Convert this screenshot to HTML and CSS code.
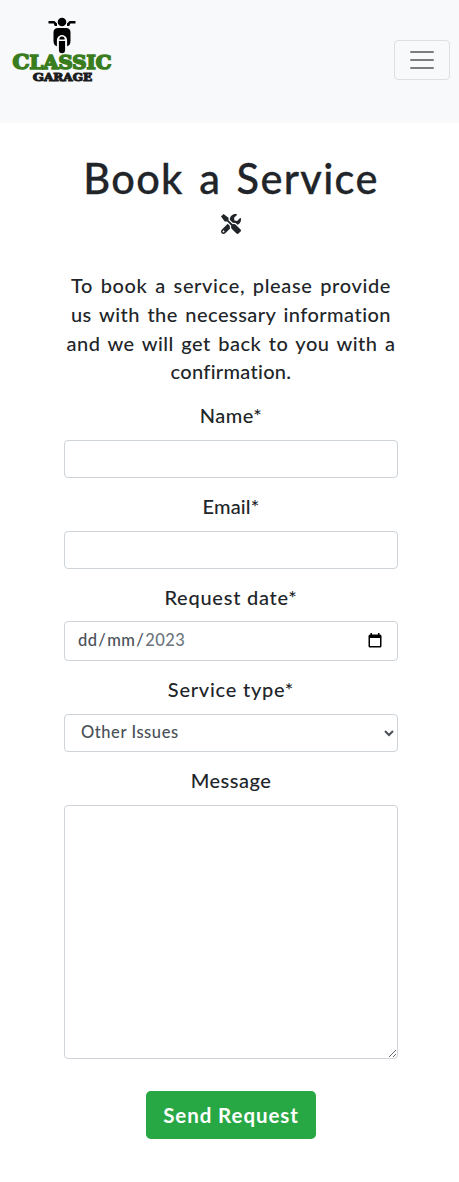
FILE: index.html
```html
<!DOCTYPE html>
<html lang="en">
<head>
<meta charset="utf-8">
<title>Classic Garage</title>
<link rel="stylesheet" href="styles.css">
</head>
<body>
<header class="navbar">
  <a class="brand" aria-label="Classic Garage">
    <svg width="104" height="72" viewBox="10 14 104 72">
      <g fill="#000">
        <circle cx="62" cy="22" r="4.3"/>
        <path d="M48.500 21h6l2.500 2.500v2.500h-2.300l-1-2.600h-5.200zM75.500 21h-6l-2.500 2.500v2.500h2.300l1-2.600h5.200z"/>
        <path d="M58 28h8q4.500 0 4.500 4.500v8.500q0 4.500-4 5.500v-6a4.500 5 0 0 0-9 0v6q-4-1-4-5.500v-8.500q0-4.500 4.500-4.500z"/>
        <path d="M59.300 39.500a2.700 3 0 0 1 5.400 0zM58.900 41h6.200v8.700a3.100 3.500 0 0 1-6.200 0z"/>
      </g>
      <path d="M57.500 47v-6.500a4.500 5 0 0 1 9 0v6.500" fill="none" stroke="#f8f9fa" stroke-width="1.200"/>
      <g class="logo-text">
        <text class="logo-classic" x="12.500" y="68.700" textLength="99" lengthAdjust="spacingAndGlyphs"><tspan class="cap-lg">C</tspan>LASSIC</text>
        <text class="logo-garage" x="32.700" y="80.700" textLength="59.400" lengthAdjust="spacingAndGlyphs"><tspan class="cap-sm">G</tspan>ARAGE</text>
      </g>
    </svg>
  </a>
  <button class="toggler" aria-label="Menu">
    <svg width="30" height="30" viewBox="0 0 30 30"><path d="M4 7h22M4 15h22M4 23h22" stroke="rgba(0,0,0,.5)" stroke-width="2" stroke-linecap="round" stroke-miterlimit="10"/></svg>
  </button>
</header>
<main class="content">
  <h1 class="title">Book a Service</h1>
  <svg class="tools" width="20" height="20" viewBox="0 0 512 512"><path fill="#212529" d="M501.100 395.700L384 278.600c-23.100-23.100-57.600-27.600-85.400-13.900L192 158.100V96L64 0 0 64l96 128h62.100l106.600 106.600c-13.600 27.800-9.200 62.300 13.900 85.400l117.100 117.100c14.600 14.600 38.200 14.600 52.700 0l52.700-52.700c14.500-14.600 14.500-38.200 0-52.700zM331.700 225c28.300 0 54.900 11 74.900 31l19.400 19.400c15.800-6.900 30.800-16.500 43.800-29.500 37.100-37.100 49.700-89.300 37.900-136.700-2.200-9-13.500-12.100-20.100-5.500l-74.400 74.400-67.900-11.300L334 98.900l74.400-74.400c6.600-6.600 3.400-17.900-5.700-20.200-47.400-11.700-99.600.9-136.600 37.900-28.500 28.500-41.900 66.100-41.200 103.600l82.100 82.100c8.100-1.900 16.500-2.900 24.700-2.900zm-103.900 82l-56.700-56.700L18.700 402.800c-25 25-25 65.500 0 90.500s65.500 25 90.500 0l123.600-123.600c-7.600-19.900-9.900-41.600-5-62.700zM64 472c-13.200 0-24-10.800-24-24 0-13.300 10.700-24 24-24s24 10.700 24 24c0 13.200-10.700 24-24 24z"/></svg>
  <p class="intro">
    <span class="line line-1">To book a service, please provide</span>
    <span class="line line-2">us with the necessary information</span>
    <span class="line line-3">and we will get back to you with a</span>
    <span class="line line-4">confirmation.</span>
  </p>
  <form class="form">
    <div class="group"><label class="label" for="name">Name*</label><input class="control" id="name" type="text"></div>
    <div class="group"><label class="label label-email" for="email">Email*</label><input class="control" id="email" type="email"></div>
    <div class="group"><span class="label label-wide">Request date*</span>
      <div class="control date"><span class="date-text">dd<i class="slash">/</i>mm<i class="slash">/</i><span class="year">2023</span></span>
        <svg width="14" height="15" viewBox="0 0 14 15"><path fill="#000" fill-rule="evenodd" d="M2.500 0H4v1.500h6V0h1.500v1.500H12q1.500 0 1.500 1.500v10q0 1.500-1.500 1.500H2Q.5 14.500.5 13V3Q.5 1.500 2 1.500h.5zM2 5v8h10V5z"/></svg>
      </div>
    </div>
    <div class="group"><label class="label label-wide" for="type">Service type*</label><select class="control select" id="type"><option>Other Issues</option></select></div>
    <div class="group"><label class="label" for="message">Message</label><textarea class="control message" id="message"></textarea></div>
    <button class="submit" type="button">Send Request</button>
  </form>
</main>
</body>
</html>
```
FILE: styles.css
```css
* { box-sizing: border-box; }
body {
  margin: 0;
  background: #fff;
  color: #212529;
  font-family: Lato, "Open Sans", sans-serif;
  font-weight: 500;
}
.navbar {
  height: 123px;
  padding: 14px 9px 0 10px;
  display: flex;
  justify-content: space-between;
  align-items: flex-start;
  background: #f8f9fa;
}
.brand { display: block; line-height: 0; }
.logo-text { font-family: "DejaVu Serif", serif; font-weight: 700; }
.logo-classic { font-size: 18.500px; fill: #3a7d1e; stroke: #3a7d1e; stroke-width: 1.600px; }
.cap-lg { font-size: 20px; }
.logo-garage { font-size: 10.500px; fill: #1c1c1c; stroke: #1c1c1c; stroke-width: 1px; }
.cap-sm { font-size: 11.500px; }
.toggler {
  width: 56px;
  height: 40px;
  margin-top: 26px;
  padding: 0;
  display: flex;
  align-items: center;
  justify-content: center;
  background: transparent;
  border: 1px solid rgba(0, 0, 0, .1);
  border-radius: 4px;
}
.toggler path { fill: none; }
.content {
  width: 334px;
  margin: 31px 0 0 64px;
  display: flex;
  flex-direction: column;
  align-items: center;
}
.title {
  margin: 0;
  font-size: 41.500px;
  line-height: 48px;
  font-weight: 500;
  letter-spacing: 1.350px;
  word-spacing: 3.500px;
  white-space: nowrap;
  -webkit-text-stroke: .3px #212529;
}
.tools { margin-top: 12px; display: block; }
.intro {
  margin: 37px 0 15px;
  font-size: 20px;
  line-height: 28.800px;
  text-align: center;
}
.line { display: block; white-space: nowrap; word-spacing: 2px; letter-spacing: .470px; }
.line-1 { letter-spacing: .640px; }
.line-4 { letter-spacing: .3px; }
.form { width: 100%; display: flex; flex-direction: column; align-items: center; }
.group { width: 100%; margin-bottom: 14px; display: flex; flex-direction: column; align-items: center; }
.group:nth-child(2) { margin-bottom: 13px; }
.label {
  margin-bottom: 10px;
  font-size: 20px;
  line-height: 29px;
  letter-spacing: .480px;
  white-space: nowrap;
}
.label-email { letter-spacing: .15px; }
.label-wide { letter-spacing: .750px; }
.group:nth-child(3) .label { padding-top: 1px; margin-bottom: 9px; }
.control {
  width: 100%;
  height: 38px;
  padding: 6px 12px;
  border: 1px solid #ced4da;
  border-radius: 4px;
  background: #fff;
  color: #495057;
  font-family: inherit;
  font-weight: 500;
  font-size: 16.500px;
}
.date { height: 40px; padding: 0 15px 2px 13px; display: flex; align-items: center; justify-content: space-between; }
.date-text { letter-spacing: .4px; }
.slash { font-style: normal; padding: 0 1px; }
.year { color: #6c757d; }
.select { letter-spacing: .560px; padding: 5px 0 7px 12px; }
.message { height: 254px; display: block; resize: vertical; }
.submit {
  width: 170px;
  height: 48px;
  margin-top: 18px;
  padding: 0;
  border: 0;
  border-radius: 4.800px;
  background: #28a745;
  color: #fff;
  font-family: inherit;
  font-size: 20.500px;
  font-weight: 700;
  letter-spacing: .930px;
}
```
